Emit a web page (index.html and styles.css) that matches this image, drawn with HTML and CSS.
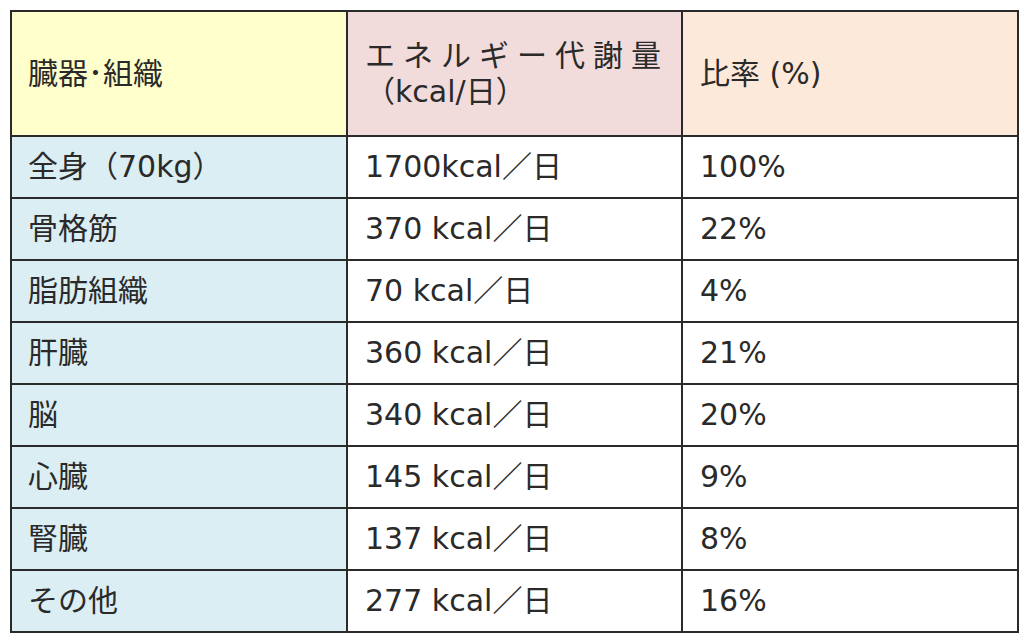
FILE: index.html
```html
<!DOCTYPE html>
<html lang="ja">
<head>
<meta charset="utf-8">
<link rel="stylesheet" href="styles.css">
</head>
<body>
<div class="wrap">
<table class="tbl">
  <colgroup><col class="c1"><col class="c2"><col class="c3"></colgroup>
  <thead>
    <tr class="head">
      <th class="h1">臓器･組織</th>
      <th class="h2"><span class="spread">エネルギー代謝量</span><br><span class="unit">（kcal/日）</span></th>
      <th class="h3">比率 (%)</th>
    </tr>
  </thead>
  <tbody>
    <tr><td class="name">全身（70kg）</td><td>1700kcal／日</td><td>100%</td></tr>
    <tr><td class="name">骨格筋</td><td>370 kcal／日</td><td>22%</td></tr>
    <tr><td class="name">脂肪組織</td><td>70 kcal／日</td><td>4%</td></tr>
    <tr><td class="name">肝臓</td><td>360 kcal／日</td><td>21%</td></tr>
    <tr><td class="name">脳</td><td>340 kcal／日</td><td>20%</td></tr>
    <tr><td class="name">心臓</td><td>145 kcal／日</td><td>9%</td></tr>
    <tr><td class="name">腎臓</td><td>137 kcal／日</td><td>8%</td></tr>
    <tr><td class="name">その他</td><td>277 kcal／日</td><td>16%</td></tr>
  </tbody>
</table>
</div>
</body>
</html>
```

FILE: styles.css
```css
html, body {
  margin: 0;
  padding: 0;
  background: #ffffff;
}
.wrap {
  padding: 10px 8px 0 10px;
}
.tbl {
  border-collapse: collapse;
  table-layout: fixed;
  width: 1007px;
  font-family: "DejaVu Sans", "Noto Sans CJK JP", sans-serif;
  font-size: 30px;
  color: #2a2a2a;
}
.c1 { width: 336px; }
.c2 { width: 335px; }
.c3 { width: 336px; }
.tbl th, .tbl td {
  border: 2px solid #2a2a2a;
  text-align: left;
  font-weight: normal;
  padding: 0 0 0 16px;
  height: 60px;
  vertical-align: middle;
  white-space: nowrap;
  line-height: 1.2;
}
.tbl td + td, .tbl th + th { padding-left: 17px; }
.head th { height: 123px; }
.h1 { background: #ffffcc; padding-top: 4px; }
.h2 { background: #f2dcdb; line-height: 40px; padding-top: 2px; }
.h3 { background: #fde9d9; padding-top: 4px; }
.spread { letter-spacing: 8px; }
.name { background: #daeef3; }
```
